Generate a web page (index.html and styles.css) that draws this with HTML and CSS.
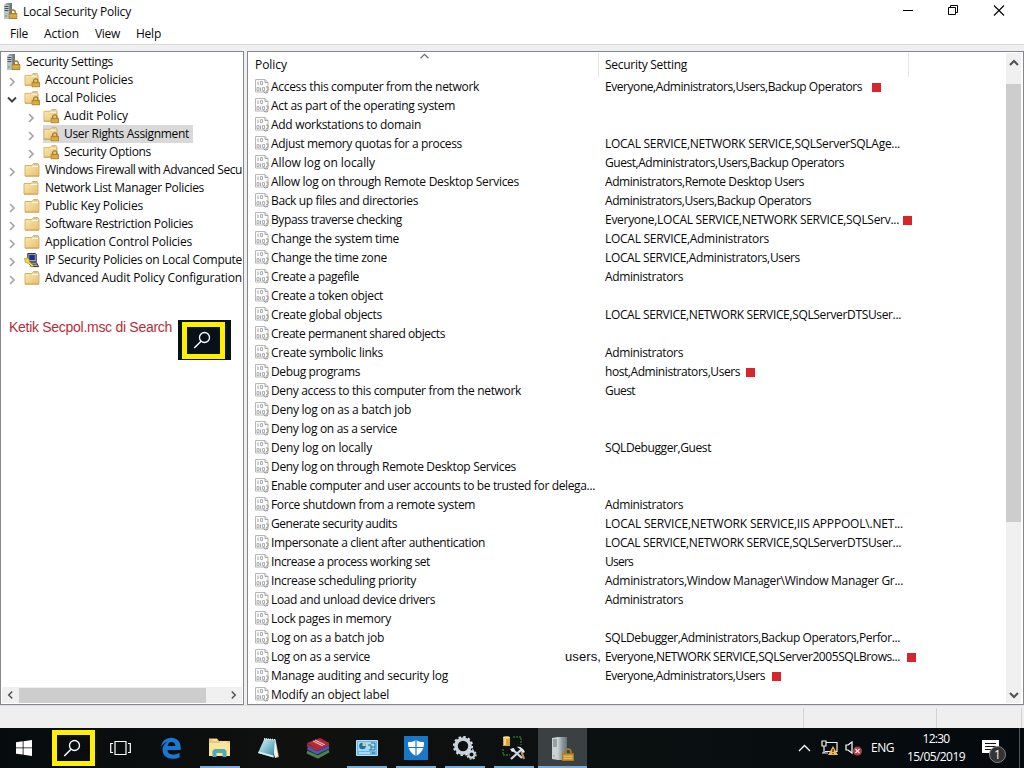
FILE: index.html
```html
<!DOCTYPE html>
<html lang="en">
<head>
<meta charset="utf-8">
<title>Local Security Policy</title>
<link rel="stylesheet" href="styles.css">
</head>
<body>
<svg class="defs" aria-hidden="true">
  <defs>
    <linearGradient id="gold" x1="0" y1="0" x2="1" y2="1"><stop offset="0" stop-color="#fdebb4"/><stop offset="1" stop-color="#e6bf6c"/></linearGradient>
    <linearGradient id="steel"><stop offset="0" stop-color="#c4ccd0"/><stop offset=".5" stop-color="#8b979c"/><stop offset="1" stop-color="#647177"/></linearGradient>
    <linearGradient id="pad" x1="0" y1="0" x2="1" y2="1"><stop offset="0" stop-color="#e6f4f7"/><stop offset=".45" stop-color="#8fc9d8"/><stop offset="1" stop-color="#2f8299"/></linearGradient>
  </defs>
  <symbol id="lock" viewBox="0 0 10 11"><path d="M2.500 5V3.500a2.500 2.500 0 0 1 5 0V5" fill="none" stroke="#a07c2c" stroke-width="1.500"/><path d="M.5 5h9v5.500h-9z" fill="#cf9a31" stroke="#a87820"/><path d="M1 7h8M1 9h8" stroke="#ecc667" stroke-width=".7"/></symbol>
  <symbol id="server" viewBox="0 0 16 17"><path d="M2 2l2-2h6v13l-2 3H2z" fill="url(#steel)"/><path d="M2 2h5v14H2z" fill="#b9c3c7"/><path d="M2.500 3.500h4M2.500 5.500h4M2.500 7.500h4" stroke="#46555b"/><path d="M3 13h2" stroke="#44aa50"/><use href="#lock" x="6.500" y="6" width="9" height="10"/></symbol>
  <symbol id="folder" viewBox="0 0 16 15"><path d="M1 2.500h7l1.500-2H14l1 2v10.500H1z" fill="url(#gold)" stroke="#d0ad64" stroke-width=".9"/><path d="M8 3.500h6" stroke="#fff9df"/><path d="M10 1.500h3" stroke="#a5bdca" stroke-width=".8"/><path d="M1 13.200h14" stroke="#c89e4c" stroke-width=".8"/></symbol>
  <symbol id="lfolder" viewBox="0 0 16 15"><use href="#folder" width="15" height="14"/><use href="#lock" x="7.500" y="5" width="8.500" height="9.500"/></symbol>
  <symbol id="ipsec" viewBox="0 0 16 16"><path d="M3.500.500h8l1 1v8h-8l-1-1z" fill="#a9abba" stroke="#22232e"/><path d="M5 2h6v5.500H5z" fill="#1b2f95"/><path d="M5 10.500h8l2 4H7z" fill="#bfc0c7" stroke="#22232b"/><path d="M7 12.500h6" stroke="#444"/><path d="M0 6l3-1 2 2v2l5 4.500-2 1.500-4-4-3-1z" fill="#eddc3e" stroke="#96851b" stroke-width=".6"/></symbol>
  <symbol id="policy" viewBox="0 0 14 15"><path d="M.5.500H10l3 3v9.500H.500z" fill="#fcfcfc" stroke="#b8b8b8"/><path d="M10 .500v3h3" fill="none" stroke="#a5a5a5"/><path d="M3 2.500v3.500M5.500 8.500V12" stroke="#9b9b9b" fill="none" stroke-width=".9"/><path d="M5.500 2.600h2v3h-2zM2 8.600h2v3H2zM7.500 8.600h2v3h-2z" fill="none" stroke="#9b9b9b" stroke-width=".8"/><path d="M8.500 12.500l1.500 1.500 3-.5M11 8h2v3l-2 1" stroke="#999" fill="none"/></symbol>
  <symbol id="right" viewBox="0 0 8 10"><path d="M2 1l4 4-4 4" fill="none" stroke="currentColor" stroke-width="1.700"/></symbol>
  <symbol id="down" viewBox="0 0 10 8"><path d="M1 2l4 4 4-4" fill="none" stroke="currentColor" stroke-width="2"/></symbol>
  <symbol id="search" viewBox="0 0 18 18"><circle cx="11.500" cy="6.500" r="5" fill="none" stroke="#fff" stroke-width="1.300"/><path d="M8 10.300L1.300 17" stroke="#fff" stroke-width="1.500"/></symbol>
</svg>

<header class="titlebar">
  <svg class="app-icon"><use href="#server"/></svg>
  <span class="title" data-w="108">Local Security Policy</span>
  <svg class="window-buttons" width="110" height="16" viewBox="0 0 110 16" fill="none" stroke="#000"><path d="M3 8.500h10M48.500 5.500h7v7h-7zM50.500 5.500v-2h7v7h-2"/><path d="M94 3.500l10 10m0-10l-10 10" stroke-width="1.100"/></svg>
</header>
<nav class="menu">
  <span class="menu-item" data-w="18">File</span><span class="menu-item" data-w="35">Action</span><span class="menu-item" data-w="25">View</span><span class="menu-item" data-w="25">Help</span>
</nav>
<main class="workspace">
  <section class="pane tree-pane">
    <div class="tree" id="tree"></div>
    <div class="hscroll"><svg class="arrow left"><use href="#right"/></svg><i class="hthumb"></i><svg class="arrow hend"><use href="#right"/></svg></div>
    <div class="annotation">
      <span class="hint" data-w="163">Ketik Secpol.msc di Search</span>
      <div class="search-sample"><div class="sample-frame"><svg class="search-icon"><use href="#search"/></svg></div></div>
    </div>
  </section>
  <section class="pane list-pane">
    <div class="list">
      <div class="list-head"><span class="col-policy"><span data-w="32">Policy</span></span><span class="col-setting"><span data-w="82">Security Setting</span></span>
        <svg class="sort" viewBox="0 0 8 5"><path d="M.5 4.500L4 1l3.500 3.500" fill="none" stroke="#666"/></svg></div>
      <div id="rows"></div>
    </div>
    <div class="vscroll"><svg class="arrow up"><use href="#down"/></svg><i class="vthumb"></i><svg class="arrow vend"><use href="#down"/></svg></div>
  </section>
</main>
<footer class="status"><i class="cell first"></i><i class="cell second"></i><i class="cell third"></i></footer>
<div class="taskbar">
  <div class="task start"><svg width="16" height="16" viewBox="0 0 16 16"><path d="M0 2.300L6.700 1.300v6.200H0zM7.500 1.200L16 0v7.500H7.500zM0 8.300h6.700v6.300L0 13.700zM7.500 8.300H16V16l-8.500-1.200z" fill="#fff"/></svg></div>
  <div class="search-box"><svg class="search-icon"><use href="#search"/></svg></div>
  <div class="task view"><svg width="21" height="16" viewBox="0 0 21 16" fill="none" stroke="#fff" stroke-width="1.200"><path d="M5 1.500h11v13H5zM3 3.500H.700v9H3M18 3.500h2.300v9H18"/></svg></div>
  <div class="task"><svg width="22" height="22" viewBox="0 0 22 22"><path fill="#1877ce" d="M1 9.800C1.800 4.400 5.600.700 11 .700c6 0 9.700 4.200 9.700 9.700V13H7.500c.2 3.300 2.700 4.600 5.900 4.600 2.300 0 4.300-.7 6.200-1.800v4.500c-2 1-4.200 1.500-6.800 1.500C6.300 21.800 2.500 18 2.500 13c0-3.600 1.800-6.500 5-8.200C4.800 5.700 2.600 7.400 1 9.800zm6.600-.7h7.800c-.1-2.800-1.500-4.100-3.900-4.100-2.200 0-3.600 1.600-3.900 4.100z"/></svg></div>
  <div class="task running"><svg width="23" height="20" viewBox="0 0 23 20"><path d="M1 2V.5h8L11 3h11v15H1z" fill="#ebc774"/><path d="M1 5h21v13H1z" fill="#f9e49c"/><path d="M4 2h5M12 4h7" stroke="#fff5c5"/><path d="M4.500 19v-6l2-2h10l2 2v6h-4v-4h-6v4z" fill="#4eabb3"/></svg></div>
  <div class="task"><svg width="24" height="22" viewBox="0 0 24 22"><path d="M18.500 2L22 20l-3.500 1-2-16z" fill="#c9a877"/><path d="M18 2l3 17-3 2-2-8z" fill="#edf3f4"/><path d="M7.500 1.500L18 2.500l-1.500 18L1 16z" fill="url(#pad)"/><path d="M1 16l15.500 4.500.2-2L2 14.500z" fill="#d7edf1"/><path d="M7 1.800l11 1" stroke="#eee" stroke-width="1.500" stroke-dasharray="1 1"/></svg></div>
  <div class="task"><svg width="24" height="23" viewBox="0 0 24 23"><path d="M1 6v11l11 5 11-7V5z" fill="#45213e"/><path d="M1 6l13-5 9 5-12 6z" fill="#b92835"/><path d="M7 4l10 5M9 3l10 5" stroke="#ddc0c0" stroke-width="1.100"/><path d="M1 8l10 5 12-6" stroke="#a92e43" stroke-width="2" fill="none"/><path d="M2 11l9 5 12-6" stroke="#405eb5" stroke-width="2.600" fill="none"/><path d="M1 15l11 5 11-6" stroke="#3d8d45" stroke-width="2.600" fill="none"/></svg></div>
  <div class="task running"><svg width="22" height="16" viewBox="0 0 22 16"><path d="M.5.500h21v15H.500z" fill="#65b9e6" stroke="#b6e3f7"/><path d="M2 2h18v9H2z" fill="#a6daf2"/><circle cx="6.500" cy="6" r="3.300" fill="#1971a9"/><path d="M6.500 6V2.700A3.300 3.300 0 0 1 9.800 6z" fill="#e7c98d"/><path d="M12 5h3v5M15 7h4M15 3h4v7h-6" fill="none" stroke="#24759e"/><path d="M3 13h11" stroke="#f4fbff"/><path d="M16 13h3" stroke="#246a91"/></svg></div>
  <div class="task running"><svg width="24" height="24" viewBox="0 0 24 24"><path d="M0 0h24v24H0z" fill="#1877c9"/><path d="M12 4c2.500 1.700 5 2 8 2 0 6-1.500 10.500-8 14C5.500 16.500 4 12 4 6c3 0 5.500-.3 8-2z" fill="#fff"/><path d="M12 4v16M4 11.500h16" stroke="#1877c9" stroke-width="1.200"/></svg></div>
  <div class="task running"><svg width="25" height="24" viewBox="0 0 25 24"><circle cx="11" cy="10" r="7" fill="none" stroke="#c8d3dc" stroke-width="3.600"/><circle cx="11" cy="10" r="9.200" fill="none" stroke="#dbe5eb" stroke-width="1.800" stroke-dasharray="2.400 2.420"/><circle cx="19.500" cy="18.500" r="3.100" fill="none" stroke="#c6d4dd" stroke-width="2.200"/><circle cx="19.500" cy="18.500" r="4.600" fill="none" stroke="#dae4ec" stroke-width="1.200" stroke-dasharray="1.800 1.810"/></svg></div>
  <div class="task running"><svg width="24" height="24" viewBox="0 0 24 24"><path d="M1 1h7v9H1z" fill="#dba330"/><ellipse cx="4.500" cy="1.500" rx="3.500" ry="1.300" fill="#ffe68f"/><path d="M3 3v6" stroke="#ffe798" stroke-width="1.500"/><path d="M11 1h8v8M1 13v6h7" fill="none" stroke="#3a9e3b" stroke-dasharray="2 1"/><path d="M19 14l3 9" stroke="#b98b5c" stroke-width="2.300"/><path d="M20 13L9 23M10 13l10 9" stroke="#cbd6df" stroke-width="2.300"/><path d="M8 13l4-1 1 3-3 1M15 11c3-1 6 1 8 5l-2 1-3-4z" fill="#e2e8ed"/></svg></div>
  <div class="task running active"><svg width="23" height="25" viewBox="0 0 23 25"><path d="M1 2l6-1v23l-6-1z" fill="#ccd1d2"/><path d="M7 1h9v23H7z" fill="url(#steel)"/><path d="M2 4h4M2 6h4M2 8h4M2 10h4" stroke="#627075"/><path d="M2 20h2" stroke="#68b978"/><use href="#lock" x="11" y="12" width="12" height="13"/></svg></div>
  <div class="tray">
    <svg class="tray-up" width="13" height="8" viewBox="0 0 13 8"><path d="M1 7l5.500-5.500L12 7" fill="none" stroke="#fff" stroke-width="1.300"/></svg>
    <svg class="network" width="18" height="16" viewBox="0 0 18 16"><path d="M5 2.500h11v9H4M1 1h4v5H1zM3 6v7M1 13h6" fill="none" stroke="#eee" stroke-width="1.200"/><path d="M12 6l5 9H7z" fill="#f3b850"/><path d="M12 9v3M12 13v1" stroke="#433018" stroke-width="1.300"/></svg>
    <svg class="sound" width="18" height="15" viewBox="0 0 18 15"><path d="M1 4h2l4-3v11L3 9H1z" fill="none" stroke="#fff" stroke-width="1.200"/><circle cx="12.500" cy="10" r="4.500" fill="#b33c43"/><path d="M10.500 8l4 4m0-4l-4 4" stroke="#fff" stroke-width="1.100"/></svg>
    <span class="language" data-w="23">ENG</span>
    <div class="clock"><span data-w="27">12:30</span><span data-w="58">15/05/2019</span></div>
    <div class="notice"><svg width="17" height="17" viewBox="0 0 17 17"><path d="M0 0h17v13h-6v4l-4-4H0z" fill="#fff"/><path d="M3 3.500h11M3 6.500h11M3 9.500h8" stroke="#111"/></svg><span class="badge">1</span></div>
    <i class="show-desktop"></i>
  </div>
</div>
<script src="app.js"></script>
</body>
</html>
```

FILE: styles.css
```css
* { box-sizing: border-box; }
body { margin: 0; width: 1024px; height: 768px; overflow: hidden; display: flex; flex-direction: column; background: #efefef; color: #080808; font: 12px/18px "Open Sans", "Noto Sans", sans-serif; }
svg { display: block; flex: none; }
.defs { position: absolute; width: 0; height: 0; }
[data-w] { white-space: pre; flex: none; }
.titlebar { height: 24px; flex: none; display: flex; align-items: center; background: #fff; padding-left: 2px; }
.app-icon { width: 16px; height: 17px; margin-bottom: 1px; }
.title { margin-left: 5px; }
.window-buttons { margin-left: auto; margin-right: 14px; margin-bottom: 5px; }
.menu { height: 21px; flex: none; display: flex; gap: 16px; padding: 1px 10px; background: #fff; border-bottom: 1px solid #d9d9d9; }
.workspace { height: 660px; flex: none; display: flex; gap: 3px; padding-top: 6px; }
.pane { height: 654px; border: 1px solid #828790; background: #fff; position: relative; }
.tree-pane { width: 244px; padding: 1px; display: flex; flex-direction: column; }
.tree { overflow: hidden; flex: 1; }
.tree-row { height: 18px; display: flex; align-items: center; padding-left: 6px; }
.tree-row.root { padding-left: 3px; }
.tree-row.child { padding-left: 25px; }
.tree-toggle { width: 8px; height: 10px; margin: 4px 8px 0 0; color: #a5a5a5; }
.tree-toggle.open { width: 10px; height: 9px; margin: 2px 7px 0 -1px; color: #444; }
.tree-toggle.none { visibility: hidden; }
.tree-toggle.none + .tree-content { margin-left: -1px; }
.tree-toggle.none + .tree-content .tree-label { padding-left: 6px; }
.tree-icon { width: 16px; height: 15px; }
.root .tree-icon { height: 17px; }
.tree-label { padding-left: 5px; display: flex; }
.tree-content { display: flex; align-items: center; height: 18px; flex: none; }
.selected .tree-content { background: #d9d9d9; padding-right: 4px; }
.hscroll { height: 16px; flex: none; display: flex; align-items: center; background: #f0f0f0; padding: 0 5px; }
.arrow { width: 7px; height: 10px; color: #505050; }
.left { transform: rotate(180deg); }
.hthumb { width: 187px; height: 15px; background: #cdcdcd; margin-left: 5px; }
.hend { margin-left: auto; }
.annotation { position: absolute; left: 8px; top: 267px; display: flex; align-items: flex-start; }
.hint { color: #b72d37; font: 14px/16px "Liberation Sans", sans-serif; }
.search-sample { width: 53px; height: 40px; background: #071119; margin-left: 6px; padding: 2px 5px 1px 4px; margin-top: 1px; }
.sample-frame { height: 37px; width: 43px; border: 5px solid #fff000; display: flex; align-items: center; justify-content: center; padding: 0 3px 2px 0; }
.search-icon { width: 18px; height: 18px; }
.list-pane { width: 777px; display: flex; padding: 1px 2px 1px 0; }
.list { flex: 1; overflow: hidden; }
.list-head { height: 24px; display: flex; position: relative; }
.col-policy { width: 351px; padding: 3px 0 0 7px; border-right: 1px solid #e5e5e5; }
.col-setting { width: 310px; padding: 3px 0 0 6px; border-right: 1px solid #e5e5e5; }
.sort { position: absolute; left: 172px; top: 0; width: 9px; height: 6px; }
.list-row { height: 19px; display: flex; align-items: center; padding-left: 7px; }
.policy-icon { width: 14px; height: 15px; }
.policy-name { width: 336px; padding-left: 2px; display: flex; }
.note { margin-left: auto; margin-right: 4px; font: 13px/18px "Liberation Sans", sans-serif; }
.marker { width: 9px; height: 9px; background: #d7252b; margin-top: 2px; }
.vscroll { width: 15px; background: #f0f0f0; display: flex; flex-direction: column; align-items: center; padding: 6px 0 4px; }
.vscroll .arrow { width: 10px; height: 8px; }
.up { transform: rotate(180deg); }
.vthumb { width: 15px; height: 438px; background: #cdcdcd; margin-top: 17px; }
.vend { margin-top: auto; }
.status { height: 23px; flex: none; display: flex; padding-top: 2px; border-top: 1px solid #ddd; }
.cell { height: 20px; border-right: 1px solid #d3d3d3; }
.first { width: 804px; } .second { width: 133px; } .third { width: 85px; }
.taskbar { height: 40px; flex: none; display: flex; background: linear-gradient(90deg, #060b0e, #10110f 30%, #0b1011 60%, #04090e); color: #fff; }
.task { width: 49px; height: 40px; display: flex; align-items: center; justify-content: center; background: linear-gradient(#78aedb, #78aedb) center bottom / 0 2px no-repeat; }
.running { background-size: 40px 2px; }
.active { background-color: #3b4042; background-size: 49px 2px; }
.start { width: 48px; }
.search-box { width: 43px; height: 36px; margin: 2px 0 0 4px; border: 5px solid #fff000; display: flex; align-items: center; justify-content: center; padding-right: 3px; }
.view { width: 51px; }
.tray { flex: 1; display: flex; align-items: center; }
.tray-up { margin-left: 211px; }
.network { margin-left: 10px; } .sound { margin-left: 6px; }
.language { margin-left: 8px; }
.clock { width: 60px; margin-left: 12px; display: flex; flex-direction: column; align-items: center; line-height: 18px; }
.notice { width: 26px; height: 30px; margin-left: 16px; padding-top: 7px; position: relative; }
.badge { position: absolute; left: 7px; top: 13px; width: 17px; height: 17px; border: 1px solid #888; border-radius: 50%; background: #333; text-align: center; line-height: 15px; }
.show-desktop { width: 1px; height: 40px; background: #50565b; margin-left: auto; margin-right: 4px; }
```

FILE: app.js
```javascript
const tree = [
  ["Security Settings", 87, "root", "server", ""],
  ["Account Policies", 88, "", "lfolder", "right"],
  ["Local Policies", 71, "", "lfolder", "down"],
  ["Audit Policy", 64, "child", "lfolder", "right"],
  ["User Rights Assignment", 125, "child selected", "lfolder", "right"],
  ["Security Options", 87, "child", "lfolder", "right"],
  ["Windows Firewall with Advanced Secu", 197, "", "folder", "right"],
  ["Network List Manager Policies", 159, "", "folder", "none"],
  ["Public Key Policies", 98, "", "folder", "right"],
  ["Software Restriction Policies", 148, "", "folder", "right"],
  ["Application Control Policies", 147, "", "folder", "right"],
  ["IP Security Policies on Local Compute", 197, "", "ipsec", "right"],
  ["Advanced Audit Policy Configuration", 197, "", "folder", "right"]
];
// Policy, label width, setting, setting width, marker distance, note
const policies = [
  ["Access this computer from the network", 208, "Everyone,Administrators,Users,Backup Operators", 257, 10],
  ["Act as part of the operating system", 184],
  ["Add workstations to domain", 150],
  ["Adjust memory quotas for a process", 191, "LOCAL SERVICE,NETWORK SERVICE,SQLServerSQLAge...", 295],
  ["Allow log on locally", 104, "Guest,Administrators,Users,Backup Operators", 239],
  ["Allow log on through Remote Desktop Services", 248, "Administrators,Remote Desktop Users", 199],
  ["Back up files and directories", 147, "Administrators,Users,Backup Operators", 206],
  ["Bypass traverse checking", 131, "Everyone,LOCAL SERVICE,NETWORK SERVICE,SQLServ...", 294, 4],
  ["Change the system time", 128, "LOCAL SERVICE,Administrators", 164],
  ["Change the time zone", 116, "LOCAL SERVICE,Administrators,Users", 195],
  ["Create a pagefile", 88, "Administrators", 78],
  ["Create a token object", 112],
  ["Create global objects", 111, "LOCAL SERVICE,NETWORK SERVICE,SQLServerDTSUser...", 296],
  ["Create permanent shared objects", 174],
  ["Create symbolic links", 112, "Administrators", 78],
  ["Debug programs", 89, "host,Administrators,Users", 135, 6],
  ["Deny access to this computer from the network", 250, "Guest", 30],
  ["Deny log on as a batch job", 140],
  ["Deny log on as a service", 126],
  ["Deny log on locally", 101, "SQLDebugger,Guest", 106],
  ["Deny log on through Remote Desktop Services", 245],
  ["Enable computer and user accounts to be trusted for delega...", 324],
  ["Force shutdown from a remote system", 204, "Administrators", 78],
  ["Generate security audits", 126, "LOCAL SERVICE,NETWORK SERVICE,IIS APPPOOL\\.NET...", 298],
  ["Impersonate a client after authentication", 214, "LOCAL SERVICE,NETWORK SERVICE,SQLServerDTSUser...", 296],
  ["Increase a process working set", 159, "Users", 28],
  ["Increase scheduling priority", 145, "Administrators,Window Manager\\Window Manager Gr...", 298],
  ["Load and unload device drivers", 164, "Administrators", 78],
  ["Lock pages in memory", 120],
  ["Log on as a batch job", 113, "SQLDebugger,Administrators,Backup Operators,Perfor...", 295],
  ["Log on as a service", 99, "Everyone,NETWORK SERVICE,SQLServer2005SQLBrows...", 295, 7, "users,"],
  ["Manage auditing and security log", 177, "Everyone,Administrators,Users", 160, 7],
  ["Modify an object label", 118]
];
const label = (text, width) => `<span data-w="${width}">${text}</span>`;
document.getElementById("tree").innerHTML = tree.map(([text, width, type, icon, toggle]) =>
  `<div class="tree-row ${type}">${toggle ? `<svg class="tree-toggle ${toggle === "down" ? "open" : toggle}"><use href="#${toggle}"/></svg>` : ""}<div class="tree-content"><svg class="tree-icon"><use href="#${icon}"/></svg><span class="tree-label">${label(text, width)}</span></div></div>`
).join("");
document.getElementById("rows").innerHTML = policies.map(([name, width, setting, settingWidth, marker, note]) =>
  `<div class="list-row"><svg class="policy-icon"><use href="#policy"/></svg><div class="policy-name">${label(name, width)}${note ? `<span class="note" data-w="36">${note}</span>` : ""}</div>${setting ? label(setting, settingWidth) : ""}${marker ? `<i class="marker" style="margin-left:${marker}px"></i>` : ""}</div>`
).join("");
document.querySelectorAll("[data-w]").forEach(el => {
  const range = document.createRange();
  range.selectNodeContents(el);
  const natural = range.getBoundingClientRect().width;
  el.style.letterSpacing = `${(Number(el.dataset.w) - natural) / el.textContent.length}px`;
});
```
